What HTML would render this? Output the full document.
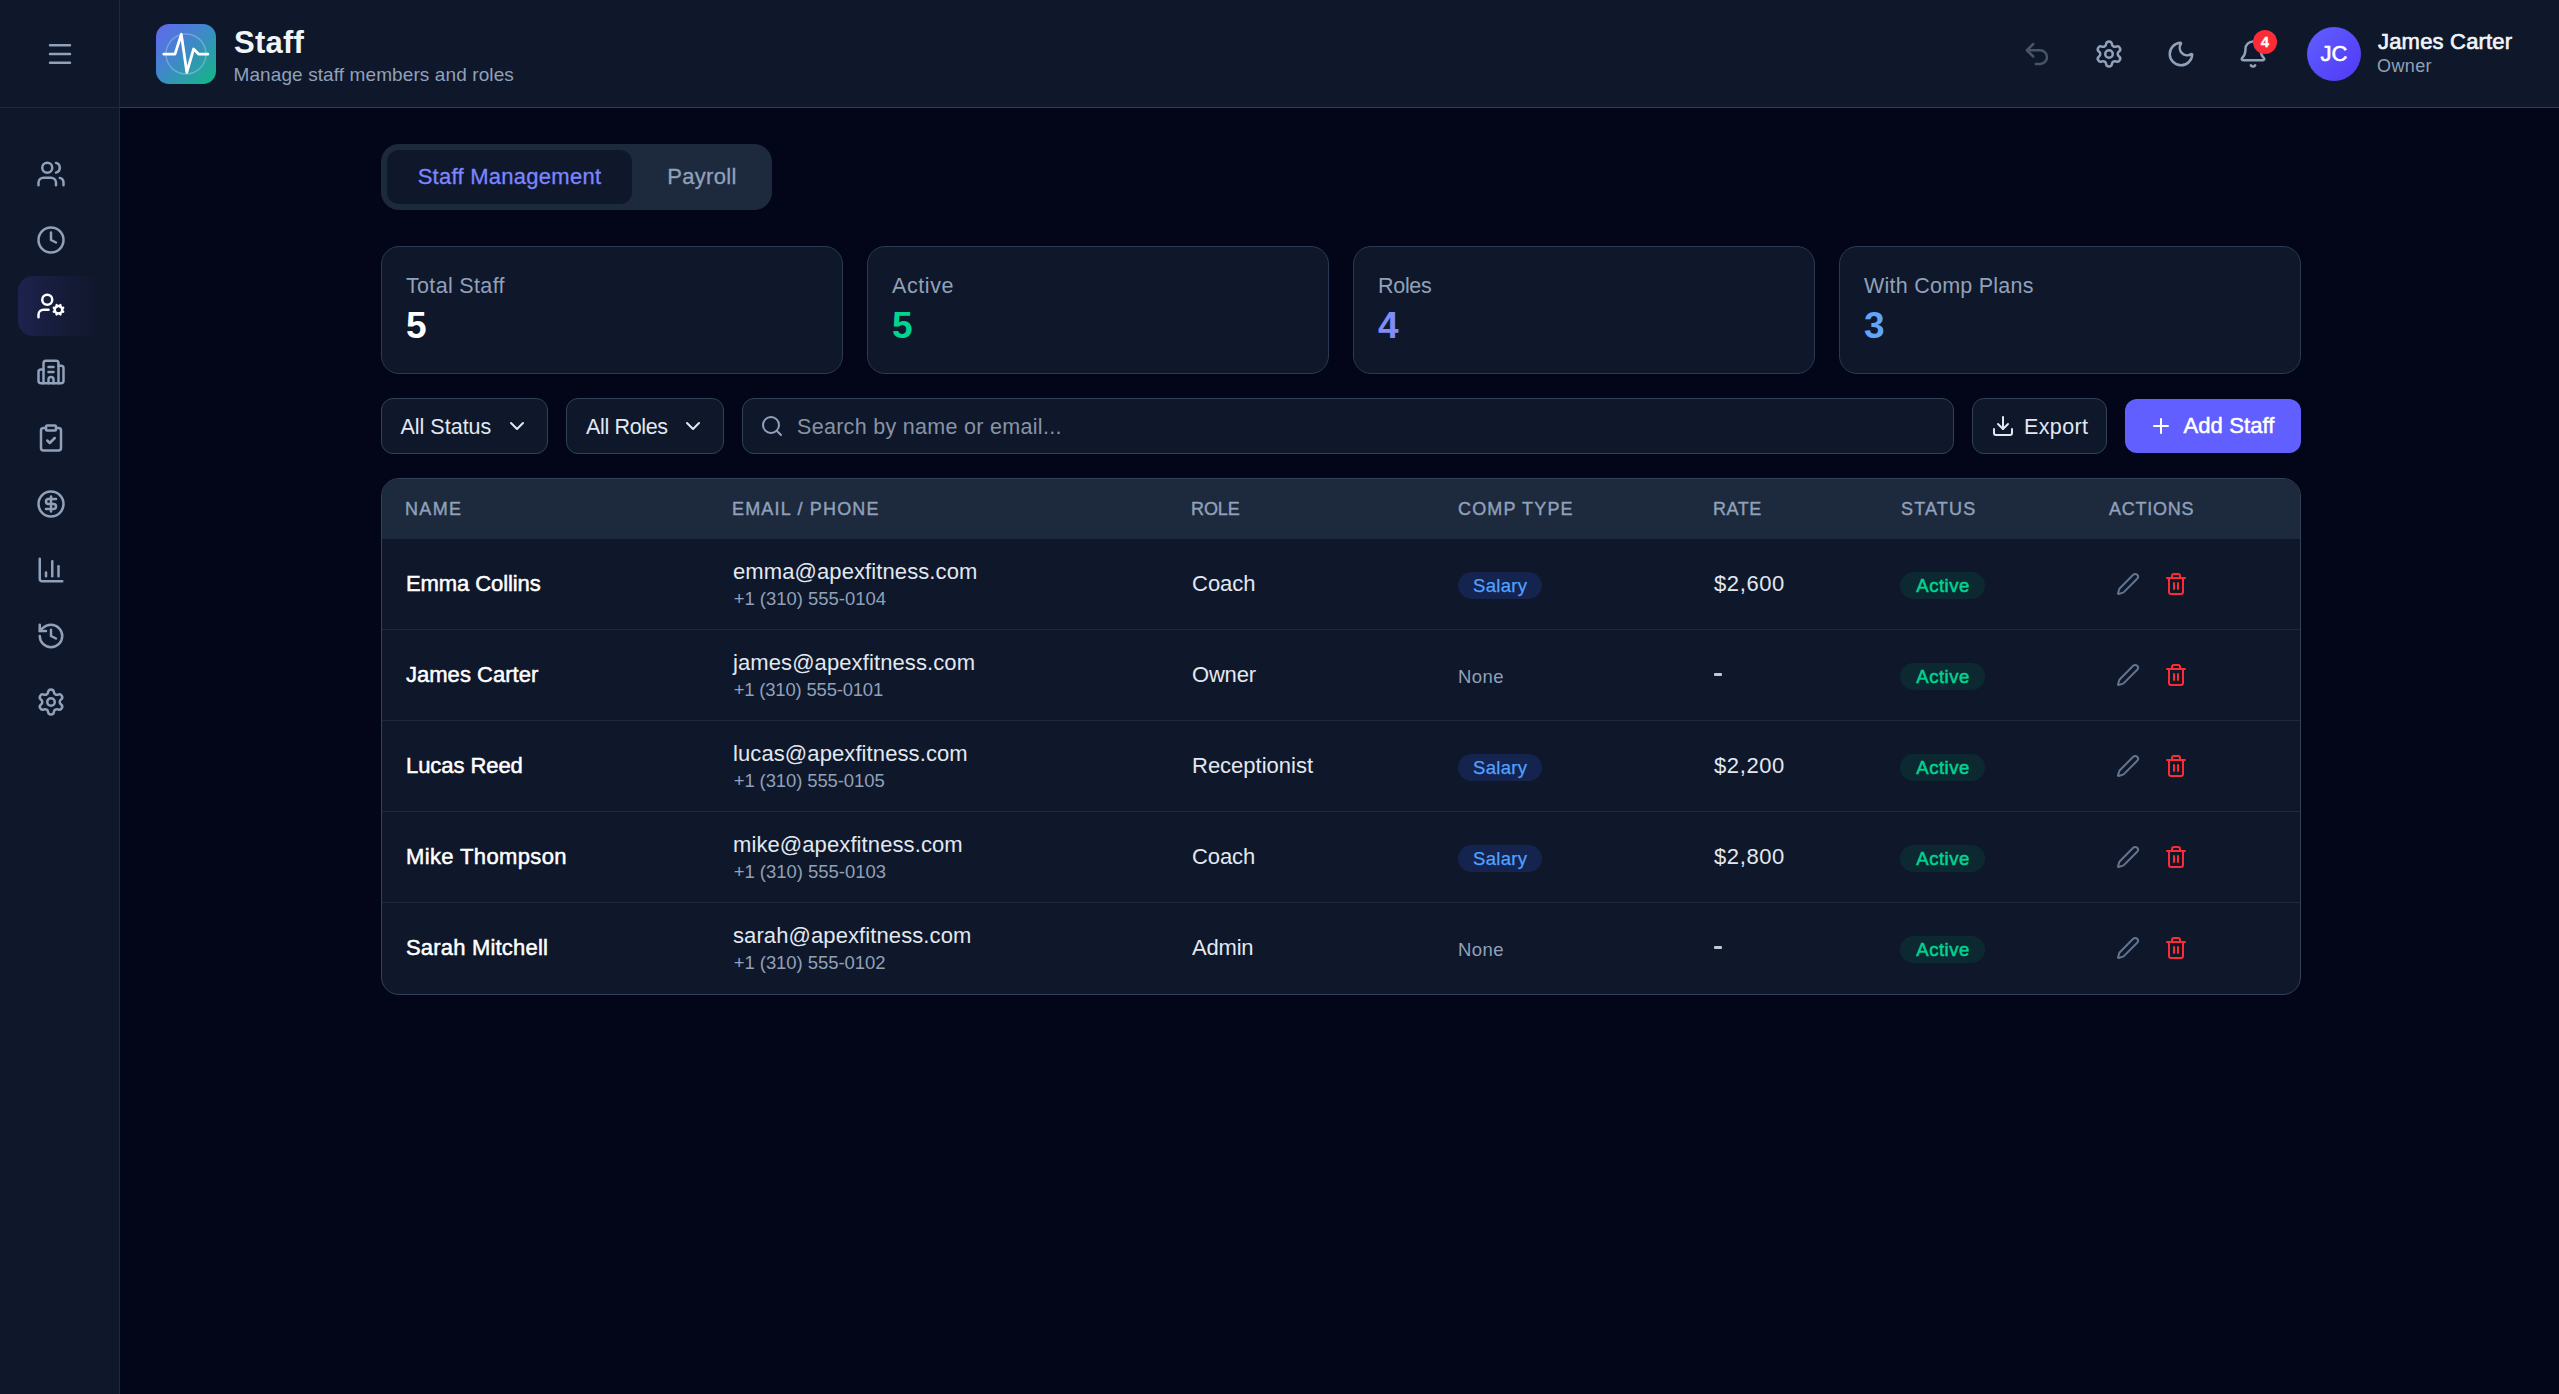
<!DOCTYPE html>
<html lang="en">
<head>
<meta charset="utf-8">
<title>Staff</title>
<style>
*{box-sizing:border-box;margin:0;padding:0}
html,body{width:2559px;height:1394px;overflow:hidden;background:#020618}
body{font-family:"Liberation Sans",sans-serif;color:#e2e8f0;position:relative}
svg{display:block}
.ic{fill:none;stroke:currentColor;stroke-width:2;stroke-linecap:round;stroke-linejoin:round}
.t{position:absolute;white-space:nowrap;line-height:1}

/* sidebar */
#sidebar{position:absolute;left:0;top:0;width:120px;height:1394px;background:#0f172b;border-right:1px solid #1d293d}
#sidebar .burger{position:absolute;left:0;top:0;width:119px;height:108px;border-bottom:1px solid #1d293d;color:#90a1b9}
#sidebar .burger svg{position:absolute;left:45px;top:39px;width:30px;height:30px}
#sidebar nav{position:absolute;left:18px;top:144px;width:84px}
#sidebar nav a{display:block;width:84px;height:60px;margin-bottom:6px;border-radius:15px;color:#90a1b9;position:relative}
#sidebar nav a svg{position:absolute;left:18px;top:15px;width:30px;height:30px}
#sidebar nav a.active{color:#fff;background:linear-gradient(90deg,rgba(97,95,255,.16) 0%,rgba(110,85,220,.055) 62%,rgba(97,95,255,0) 100%)}

/* header */
#header{position:absolute;left:120px;top:0;width:2439px;height:108px;background:#0f172b;border-bottom:1px solid #314158}
#logo{position:absolute;left:36px;top:24px;width:60px;height:60px;border-radius:13px;background:linear-gradient(135deg,#6366f1 0%,#3b8cc4 50%,#10b981 100%);overflow:hidden}
#logo svg{width:60px;height:60px}
#h-title{left:114px;top:27px;font-size:31px;font-weight:700;color:#f1f5f9;letter-spacing:.25px}
#h-sub{left:113.5px;top:65px;font-size:19px;color:#90a1b9;letter-spacing:.1px}
.hbtn{position:absolute;top:39px;width:30px;height:30px;color:#90a1b9}
.hbtn svg{width:30px;height:30px}
#badge{position:absolute;left:2133px;top:30px;width:24px;height:24px;border-radius:12px;background:#fb2c36;color:#fff;font-size:15px;font-weight:700;-webkit-text-stroke:.3px #fff;text-align:center;line-height:24px}
#avatar{position:absolute;left:2187px;top:27px;width:54px;height:54px;border-radius:27px;background:linear-gradient(135deg,#615fff,#4f39f6);color:#fff;font-weight:400;-webkit-text-stroke:.6px #fff;font-size:22px;text-align:center;line-height:53px}
#u-name{left:2258px;top:31px;font-size:22px;font-weight:400;color:#f1f5f9;-webkit-text-stroke:.65px #f1f5f9}
#u-role{left:2257px;top:57px;font-size:18px;color:#90a1b9;letter-spacing:.4px}

/* main */
#main{position:absolute;left:381px;top:144px;width:1920px}
#tabs{position:absolute;left:0;top:0;width:391px;height:66px;border-radius:18px;background:#1d293d}
#tabs .tab{position:absolute;top:6px;height:54px;border-radius:12px;font-size:22px;line-height:54px;text-align:center;color:#90a1b9;-webkit-text-stroke:.3px currentColor}
#tabs .tab.on{left:6px;width:245px;background:#0f172b;color:#7c86ff}
#tabs .tab.off{left:257px;width:128px}

.stat{position:absolute;top:102px;width:462px;height:128px;border-radius:18px;background:#0f172b;border:1px solid #2b3a53}
.stat .lbl{left:24px;top:29px;font-size:21.5px;color:#90a1b9}
.stat .num{left:24px;top:60px;font-size:37px;font-weight:700}

.ctl{position:absolute;top:254px;height:56px;border-radius:12px;background:#0f172b;border:1px solid #314158;color:#e2e8f0;font-size:21.5px}
.ctl .t{top:18px}
.ctl svg{position:absolute}
#addbtn{position:absolute;left:1744px;top:255px;width:176px;height:54px;border-radius:12px;background:#615fff;color:#fff;font-size:22px;font-weight:400;-webkit-text-stroke:.5px #fff}

#tbl{position:absolute;left:0;top:334px;width:1920px;height:517px;border-radius:18px;background:#0f172b;border:1px solid #314158;overflow:hidden}
#tbl table{border-collapse:separate;border-spacing:0;width:1918px;table-layout:fixed}
#tbl th{height:60px;background:#1d293d;text-align:left;padding:1px 0 0 24px;font-size:18px;font-weight:400;-webkit-text-stroke:.4px #90a1b9;letter-spacing:.9px;color:#90a1b9;text-transform:uppercase}
#tbl td{height:91px;padding:0 0 0 24px;border-bottom:1px solid #1d293d;font-size:22px;vertical-align:middle;color:#e2e8f0;position:relative}
#tbl tbody tr:last-child td{border-bottom-color:transparent}
#tbl td.nm{font-weight:400;font-size:22px;color:#fff;-webkit-text-stroke:.5px #fff;padding-bottom:1px}
#tbl .em{display:block;margin-top:2px;font-size:22px;line-height:27px;color:#e2e8f0;letter-spacing:.1px}
#tbl .ph{display:block;font-size:18.5px;line-height:27px;color:#90a1b9}
#tbl .rt{letter-spacing:.6px}
.dash{display:inline-block;width:8px;height:3px;background:#e2e8f0;border-radius:1px;position:relative;top:-6px;opacity:.85}
.pill{display:inline-block;position:relative;top:1px;height:27px;line-height:27px;border-radius:14px;padding:0 15px;font-size:18px;vertical-align:middle}
.pill.sal{background:#15234f;color:#51a2ff;font-size:18.5px;letter-spacing:.3px;-webkit-text-stroke:.25px #51a2ff}
.pill.act{background:#0c2932;color:#00d492;font-size:18.5px;font-weight:400;-webkit-text-stroke:.55px #00d492;letter-spacing:.5px;padding:0 15.5px 0 16.3px}
.none{font-size:18.5px;color:#90a1b9;letter-spacing:.4px;position:relative;top:1px}
.acts svg{position:absolute;top:33px;width:24px;height:24px}
.acts .pen{left:32px;color:#62748e}
.acts .del{left:80px;color:#fb2c36}
.rl{margin-left:1px}
.ph{margin-left:.7px}
#th1,#th2,#th5{margin-left:-1px}
#th7,#th6{margin-left:1px}
/*FIT*/
#n1{letter-spacing:-0.09px}
#n2{letter-spacing:0.02px}
#n3{letter-spacing:-0.07px}
#n4{letter-spacing:0.37px}
#n5{letter-spacing:0.19px}
#e1{letter-spacing:0.09px}
#e2{letter-spacing:0.2px}
#e3{letter-spacing:0.2px}
#e4{letter-spacing:0.19px}
#e5{letter-spacing:0.1px}
#p1{letter-spacing:-0.02px}
#p2{letter-spacing:-0.2px}
#p3{letter-spacing:-0.11px}
#p4{letter-spacing:-0.02px}
#p5{letter-spacing:-0.05px}
#r1{letter-spacing:0.0px}
#r2{letter-spacing:-0.19px}
#r3{letter-spacing:0.0px}
#r4{letter-spacing:-0.12px}
#r5{letter-spacing:-0.19px}
#rt1{letter-spacing:0.62px}
#rt3{letter-spacing:0.5px}
#rt4{letter-spacing:0.55px}
#u-name{letter-spacing:0.19px}
#tab1{letter-spacing:0.27px}
#tab2{letter-spacing:0.3px}
#addtxt{letter-spacing:0.1px}
#th1{letter-spacing:1.37px}
#th2{letter-spacing:1.18px}
#th3{letter-spacing:-0.1px}
#th4{letter-spacing:1.15px}
#th5{letter-spacing:0.5px}
#th6{letter-spacing:1.18px}
#th7{letter-spacing:0.73px}
/*ENDFIT*/
</style>
</head>
<body>

<aside id="sidebar">
  <div class="burger">
    <svg class="ic" viewBox="0 0 24 24"><path d="M4 5h16M4 12h16M4 19h16"/></svg>
  </div>
  <nav>
    <a><svg class="ic" viewBox="0 0 24 24"><path d="M16 21v-2a4 4 0 0 0-4-4H6a4 4 0 0 0-4 4v2"/><circle cx="9" cy="7" r="4"/><path d="M22 21v-2a4 4 0 0 0-3-3.87"/><path d="M16 3.13a4 4 0 0 1 0 7.75"/></svg></a>
    <a><svg class="ic" viewBox="0 0 24 24"><circle cx="12" cy="12" r="10"/><path d="M12 6v6l4 2"/></svg></a>
    <a class="active"><svg class="ic" viewBox="0 0 24 24"><path d="M10 15H6a4 4 0 0 0-4 4v2"/><path d="m14.305 16.53.923-.382"/><path d="m15.228 13.852-.923-.383"/><path d="m16.852 12.228-.383-.923"/><path d="m16.852 17.772-.383.924"/><path d="m19.148 12.228.383-.923"/><path d="m19.53 18.696-.382-.924"/><path d="m20.772 13.852.924-.383"/><path d="m20.772 16.148.924.383"/><circle cx="18" cy="15" r="3"/><circle cx="9" cy="7" r="4"/></svg></a>
    <a><svg class="ic" viewBox="0 0 24 24"><path d="M10 12h4"/><path d="M10 8h4"/><path d="M14 21v-3a2 2 0 0 0-4 0v3"/><path d="M6 10H4a2 2 0 0 0-2 2v7a2 2 0 0 0 2 2h16a2 2 0 0 0 2-2V9a2 2 0 0 0-2-2h-2"/><path d="M6 21V5a2 2 0 0 1 2-2h8a2 2 0 0 1 2 2v16"/></svg></a>
    <a><svg class="ic" viewBox="0 0 24 24"><rect width="8" height="4" x="8" y="2" rx="1" ry="1"/><path d="M16 4h2a2 2 0 0 1 2 2v14a2 2 0 0 1-2 2H6a2 2 0 0 1-2-2V6a2 2 0 0 1 2-2h2"/><path d="m9 14 2 2 4-4"/></svg></a>
    <a><svg class="ic" viewBox="0 0 24 24"><circle cx="12" cy="12" r="10"/><path d="M16 8h-6a2 2 0 1 0 0 4h4a2 2 0 1 1 0 4H8"/><path d="M12 18V6"/></svg></a>
    <a><svg class="ic" viewBox="0 0 24 24"><path d="M3 3v16a2 2 0 0 0 2 2h16"/><path d="M18 17V9"/><path d="M13 17V5"/><path d="M8 17v-3"/></svg></a>
    <a><svg class="ic" viewBox="0 0 24 24"><path d="M3 12a9 9 0 1 0 9-9 9.75 9.75 0 0 0-6.74 2.74L3 8"/><path d="M3 3v5h5"/><path d="M12 7v5l4 2"/></svg></a>
    <a><svg class="ic" viewBox="0 0 24 24"><path d="M9.671 4.136a2.34 2.34 0 0 1 4.659 0 2.34 2.34 0 0 0 3.319 1.915 2.34 2.34 0 0 1 2.33 4.033 2.34 2.34 0 0 0 0 3.831 2.34 2.34 0 0 1-2.33 4.033 2.34 2.34 0 0 0-3.319 1.915 2.34 2.34 0 0 1-4.659 0 2.34 2.34 0 0 0-3.32-1.915 2.34 2.34 0 0 1-2.33-4.033 2.34 2.34 0 0 0 0-3.831A2.34 2.34 0 0 1 6.35 6.051a2.34 2.34 0 0 0 3.319-1.915"/><circle cx="12" cy="12" r="3"/></svg></a>
  </nav>
</aside>

<header id="header">
  <div id="logo">
    <svg viewBox="0 0 60 60" fill="none"><circle cx="30" cy="30" r="20" stroke="#fff" stroke-opacity=".25" stroke-width="1.5"/><path d="M7.8 30.2H19L25.3 10.3 30.8 48.4 37.6 25l5.2 5.2h9.1" stroke="#fff" stroke-width="2.8" stroke-linecap="round" stroke-linejoin="round"/></svg>
  </div>
  <div class="t" id="h-title">Staff</div>
  <div class="t" id="h-sub">Manage staff members and roles</div>

  <div class="hbtn" style="left:1902px;color:#475569"><svg class="ic" viewBox="0 0 24 24"><path d="M9 14 4 9l5-5"/><path d="M4 9h10.5a5.5 5.5 0 0 1 5.5 5.5a5.5 5.5 0 0 1-5.5 5.5H11"/></svg></div>
  <div class="hbtn" style="left:1974px"><svg class="ic" viewBox="0 0 24 24"><path d="M9.671 4.136a2.34 2.34 0 0 1 4.659 0 2.34 2.34 0 0 0 3.319 1.915 2.34 2.34 0 0 1 2.33 4.033 2.34 2.34 0 0 0 0 3.831 2.34 2.34 0 0 1-2.33 4.033 2.34 2.34 0 0 0-3.319 1.915 2.34 2.34 0 0 1-4.659 0 2.34 2.34 0 0 0-3.32-1.915 2.34 2.34 0 0 1-2.33-4.033 2.34 2.34 0 0 0 0-3.831A2.34 2.34 0 0 1 6.35 6.051a2.34 2.34 0 0 0 3.319-1.915"/><circle cx="12" cy="12" r="3"/></svg></div>
  <div class="hbtn" style="left:2046px"><svg class="ic" viewBox="0 0 24 24"><path d="M20.985 12.486a9 9 0 1 1-9.473-9.472c.405-.022.617.46.402.803a6 6 0 0 0 8.268 8.268c.344-.215.825-.004.803.401"/></svg></div>
  <div class="hbtn" style="left:2118px"><svg class="ic" viewBox="0 0 24 24"><path d="M10.268 21a2 2 0 0 0 3.464 0"/><path d="M3.262 15.326A1 1 0 0 0 4 17h16a1 1 0 0 0 .74-1.673C19.41 13.956 18 12.499 18 8A6 6 0 0 0 6 8c0 4.499-1.411 5.956-2.738 7.326"/></svg></div>
  <div id="badge">4</div>
  <div id="avatar">JC</div>
  <div class="t" id="u-name">James Carter</div>
  <div class="t" id="u-role">Owner</div>
</header>

<main id="main">
  <div id="tabs">
    <div class="tab on"><span id="tab1">Staff Management</span></div>
    <div class="tab off"><span id="tab2">Payroll</span></div>
  </div>

  <div class="stat" style="left:0"><div class="t lbl" style="letter-spacing:.33px">Total Staff</div><div class="t num" style="color:#fff">5</div></div>
  <div class="stat" style="left:486px"><div class="t lbl" style="letter-spacing:.58px">Active</div><div class="t num" style="color:#00d492">5</div></div>
  <div class="stat" style="left:972px"><div class="t lbl" style="letter-spacing:-.3px">Roles</div><div class="t num" style="color:#818cf8">4</div></div>
  <div class="stat" style="left:1458px"><div class="t lbl" style="letter-spacing:.24px">With Comp Plans</div><div class="t num" style="color:#60a5fa">3</div></div>

  <div class="ctl" style="left:0;width:167px"><div class="t" style="left:18.5px">All Status</div><svg class="ic" viewBox="0 0 24 24" style="left:123px;top:15px;width:24px;height:24px"><path d="m6 9 6 6 6-6"/></svg></div>
  <div class="ctl" style="left:185px;width:158px"><div class="t" style="left:19px;letter-spacing:-.34px">All Roles</div><svg class="ic" viewBox="0 0 24 24" style="left:114px;top:15px;width:24px;height:24px"><path d="m6 9 6 6 6-6"/></svg></div>
  <div class="ctl" style="left:361px;width:1212px"><svg class="ic" viewBox="0 0 24 24" style="left:17px;top:15px;width:24px;height:24px;color:#90a1b9"><circle cx="11" cy="11" r="8"/><path d="m21 21-4.3-4.3"/></svg><div class="t" style="left:54px;color:#8893a5;letter-spacing:.3px">Search by name or email...</div></div>
  <div class="ctl" style="left:1591px;width:135px"><svg class="ic" viewBox="0 0 24 24" style="left:18px;top:15px;width:24px;height:24px"><path d="M21 15v4a2 2 0 0 1-2 2H5a2 2 0 0 1-2-2v-4"/><path d="m7 10 5 5 5-5"/><path d="M12 15V3"/></svg><div class="t" style="left:51px;letter-spacing:.36px">Export</div></div>
  <div id="addbtn"><svg class="ic" viewBox="0 0 24 24" style="position:absolute;left:24px;top:15px;width:24px;height:24px"><path d="M5 12h14"/><path d="M12 5v14"/></svg><div class="t" id="addtxt" style="left:58.5px;top:16px">Add Staff</div></div>

  <div id="tbl">
    <table>
      <colgroup><col style="width:327px"><col style="width:458px"><col style="width:267px"><col style="width:256px"><col style="width:186px"><col style="width:208px"><col style="width:216px"></colgroup>
      <thead><tr><th><span id="th1">Name</span></th><th><span id="th2">Email / Phone</span></th><th><span id="th3">Role</span></th><th><span id="th4">Comp Type</span></th><th><span id="th5">Rate</span></th><th><span id="th6">Status</span></th><th><span id="th7">Actions</span></th></tr></thead>
      <tbody>
        <tr><td class="nm"><span id="n1">Emma Collins</span></td><td><span class="em" id="e1">emma@apexfitness.com</span><span class="ph" id="p1">+1 (310) 555-0104</span></td><td><span class="rl" id="r1">Coach</span></td><td><span class="pill sal">Salary</span></td><td><span class="rt" id="rt1">$2,600</span></td><td><span class="pill act">Active</span></td><td class="acts"><svg class="ic pen" viewBox="0 0 24 24"><path d="M21.174 6.812a1 1 0 0 0-3.986-3.987L3.842 16.174a2 2 0 0 0-.5.83l-1.321 4.352a.5.5 0 0 0 .623.622l4.353-1.32a2 2 0 0 0 .83-.497z"/></svg><svg class="ic del" viewBox="0 0 24 24"><path d="M10 11v6"/><path d="M14 11v6"/><path d="M19 6v14a2 2 0 0 1-2 2H7a2 2 0 0 1-2-2V6"/><path d="M3 6h18"/><path d="M8 6V4a2 2 0 0 1 2-2h4a2 2 0 0 1 2 2v2"/></svg></td></tr>
        <tr><td class="nm"><span id="n2">James Carter</span></td><td><span class="em" id="e2">james@apexfitness.com</span><span class="ph" id="p2">+1 (310) 555-0101</span></td><td><span class="rl" id="r2">Owner</span></td><td><span class="none">None</span></td><td><span class="dash"></span></td><td><span class="pill act">Active</span></td><td class="acts"><svg class="ic pen" viewBox="0 0 24 24"><path d="M21.174 6.812a1 1 0 0 0-3.986-3.987L3.842 16.174a2 2 0 0 0-.5.83l-1.321 4.352a.5.5 0 0 0 .623.622l4.353-1.32a2 2 0 0 0 .83-.497z"/></svg><svg class="ic del" viewBox="0 0 24 24"><path d="M10 11v6"/><path d="M14 11v6"/><path d="M19 6v14a2 2 0 0 1-2 2H7a2 2 0 0 1-2-2V6"/><path d="M3 6h18"/><path d="M8 6V4a2 2 0 0 1 2-2h4a2 2 0 0 1 2 2v2"/></svg></td></tr>
        <tr><td class="nm"><span id="n3">Lucas Reed</span></td><td><span class="em" id="e3">lucas@apexfitness.com</span><span class="ph" id="p3">+1 (310) 555-0105</span></td><td><span class="rl" id="r3">Receptionist</span></td><td><span class="pill sal">Salary</span></td><td><span class="rt" id="rt3">$2,200</span></td><td><span class="pill act">Active</span></td><td class="acts"><svg class="ic pen" viewBox="0 0 24 24"><path d="M21.174 6.812a1 1 0 0 0-3.986-3.987L3.842 16.174a2 2 0 0 0-.5.83l-1.321 4.352a.5.5 0 0 0 .623.622l4.353-1.32a2 2 0 0 0 .83-.497z"/></svg><svg class="ic del" viewBox="0 0 24 24"><path d="M10 11v6"/><path d="M14 11v6"/><path d="M19 6v14a2 2 0 0 1-2 2H7a2 2 0 0 1-2-2V6"/><path d="M3 6h18"/><path d="M8 6V4a2 2 0 0 1 2-2h4a2 2 0 0 1 2 2v2"/></svg></td></tr>
        <tr><td class="nm"><span id="n4">Mike Thompson</span></td><td><span class="em" id="e4">mike@apexfitness.com</span><span class="ph" id="p4">+1 (310) 555-0103</span></td><td><span class="rl" id="r4">Coach</span></td><td><span class="pill sal">Salary</span></td><td><span class="rt" id="rt4">$2,800</span></td><td><span class="pill act">Active</span></td><td class="acts"><svg class="ic pen" viewBox="0 0 24 24"><path d="M21.174 6.812a1 1 0 0 0-3.986-3.987L3.842 16.174a2 2 0 0 0-.5.83l-1.321 4.352a.5.5 0 0 0 .623.622l4.353-1.32a2 2 0 0 0 .83-.497z"/></svg><svg class="ic del" viewBox="0 0 24 24"><path d="M10 11v6"/><path d="M14 11v6"/><path d="M19 6v14a2 2 0 0 1-2 2H7a2 2 0 0 1-2-2V6"/><path d="M3 6h18"/><path d="M8 6V4a2 2 0 0 1 2-2h4a2 2 0 0 1 2 2v2"/></svg></td></tr>
        <tr><td class="nm"><span id="n5">Sarah Mitchell</span></td><td><span class="em" id="e5">sarah@apexfitness.com</span><span class="ph" id="p5">+1 (310) 555-0102</span></td><td><span class="rl" id="r5">Admin</span></td><td><span class="none">None</span></td><td><span class="dash"></span></td><td><span class="pill act">Active</span></td><td class="acts"><svg class="ic pen" viewBox="0 0 24 24"><path d="M21.174 6.812a1 1 0 0 0-3.986-3.987L3.842 16.174a2 2 0 0 0-.5.83l-1.321 4.352a.5.5 0 0 0 .623.622l4.353-1.32a2 2 0 0 0 .83-.497z"/></svg><svg class="ic del" viewBox="0 0 24 24"><path d="M10 11v6"/><path d="M14 11v6"/><path d="M19 6v14a2 2 0 0 1-2 2H7a2 2 0 0 1-2-2V6"/><path d="M3 6h18"/><path d="M8 6V4a2 2 0 0 1 2-2h4a2 2 0 0 1 2 2v2"/></svg></td></tr>
      </tbody>
    </table>
  </div>
</main>

</body>
</html>
